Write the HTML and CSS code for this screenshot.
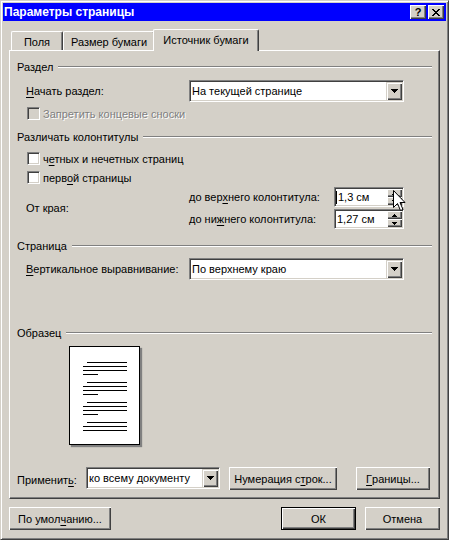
FILE: index.html
```html
<!DOCTYPE html>
<html lang="ru">
<head>
<meta charset="utf-8">
<title>Параметры страницы</title>
<link rel="stylesheet" href="styles.css">
</head>
<body>
<div class="window">
  <div class="titlebar">
    <span class="title">Параметры страницы</span>
    <div class="caption-btns">
      <span class="cbtn help">?</span>
      <span class="cbtn"><svg width="8" height="7" viewBox="0 0 8 7" shape-rendering="crispEdges"><path d="M0 0h2v1H0z M6 0h2v1H6z M1 1h2v1H1z M5 1h2v1H5z M2 2h4v1H2z M3 3h2v1H3z M2 4h4v1H2z M1 5h2v1H1z M5 5h2v1H5z M0 6h2v1H0z M6 6h2v1H6z" fill="#000"/></svg></span>
    </div>
  </div>

  <div class="tabs">
    <div class="tab t1">Поля</div>
    <div class="tab t2">Размер бумаги</div>
    <div class="tab t3 active">Источник бумаги</div>
  </div>

  <div class="panel">
    <div class="group"><span>Раздел</span><span class="rule"></span></div>

    <div class="row indent mt6">
      <span class="lbl"><u>Н</u>ачать раздел:</span>
      <div class="combo c-wide">
        <span class="combo-text">На текущей странице</span>
        <span class="drop"><svg width="7" height="4" viewBox="0 0 7 4" shape-rendering="crispEdges"><path d="M0 0h7v1H0z M1 1h5v1H1z M2 2h3v1H2z M3 3h1v1H3z" fill="#000"/></svg></span>
      </div>
    </div>

    <div class="chk disabled mt4"><span class="box"></span><span>Запретить концевые сноски</span></div>

    <div class="group mt9"><span>Различать колонтитулы</span><span class="rule"></span></div>

    <div class="chk mt7"><span class="box"></span><span>ч<u>е</u>тных и нечетных страниц</span></div>
    <div class="chk mt4"><span class="box"></span><span>перв<u>о</u>й страницы</span></div>

    <div class="margins mt2">
      <span class="lbl">От края:</span>
      <div class="spin-col">
        <div class="spin-row">
          <span class="spin-lbl">до вер<u>х</u>него колонтитула:</span>
          <div class="spin">
            <span class="spin-text"><i class="caret"></i>1,3 см</span>
            <span class="spin-btns">
              <span class="sb"><svg width="5" height="3" viewBox="0 0 5 3" shape-rendering="crispEdges"><path d="M2 0h1v1H2z M1 1h3v1H1z M0 2h5v1H0z" fill="#000"/></svg></span>
              <span class="sb"><svg width="5" height="3" viewBox="0 0 5 3" shape-rendering="crispEdges"><path d="M0 0h5v1H0z M1 1h3v1H1z M2 2h1v1H2z" fill="#000"/></svg></span>
            </span>
            <svg class="cursor" width="13" height="22" viewBox="0 0 13 22"><polygon points="0.5,0.5 0.5,17.5 4.5,13.5 7.5,20.5 10,19.5 7,12.5 12,12.5" fill="#fff" stroke="#000" stroke-width="1" stroke-linejoin="miter"/></svg>
          </div>
        </div>
        <div class="spin-row">
          <span class="spin-lbl">до ни<u>ж</u>него колонтитула:</span>
          <div class="spin">
            <span class="spin-text">1,27 см</span>
            <span class="spin-btns">
              <span class="sb"><svg width="5" height="3" viewBox="0 0 5 3" shape-rendering="crispEdges"><path d="M2 0h1v1H2z M1 1h3v1H1z M0 2h5v1H0z" fill="#000"/></svg></span>
              <span class="sb"><svg width="5" height="3" viewBox="0 0 5 3" shape-rendering="crispEdges"><path d="M0 0h5v1H0z M1 1h3v1H1z M2 2h1v1H2z" fill="#000"/></svg></span>
            </span>
          </div>
        </div>
      </div>
    </div>

    <div class="group mt10"><span>Страница</span><span class="rule"></span></div>

    <div class="row indent mt5">
      <span class="lbl"><u>В</u>ертикальное выравнивание:</span>
      <div class="combo c-wide">
        <span class="combo-text">По верхнему краю</span>
        <span class="drop"><svg width="7" height="4" viewBox="0 0 7 4" shape-rendering="crispEdges"><path d="M0 0h7v1H0z M1 1h5v1H1z M2 2h3v1H2z M3 3h1v1H3z" fill="#000"/></svg></span>
      </div>
    </div>

    <div class="group mt46"><span>Образец</span><span class="rule"></span></div>

    <div class="preview">
      <div class="para"><i class="ln first"></i><i class="ln"></i><i class="ln"></i><i class="ln short"></i></div>
      <div class="para"><i class="ln first"></i><i class="ln"></i><i class="ln"></i><i class="ln short"></i></div>
      <div class="para"><i class="ln first"></i><i class="ln"></i><i class="ln"></i><i class="ln short"></i></div>
      <div class="para"><i class="ln first"></i><i class="ln"></i><i class="ln"></i></div>
    </div>

    <div class="apply">
      <span class="apply-lbl">Применит<u>ь</u>:</span>
      <div class="combo c-apply">
        <span class="combo-text">ко всему документу</span>
        <span class="drop"><svg width="7" height="4" viewBox="0 0 7 4" shape-rendering="crispEdges"><path d="M0 0h7v1H0z M1 1h5v1H1z M2 2h3v1H2z M3 3h1v1H3z" fill="#000"/></svg></span>
      </div>
      <button class="btn b-lines">Нумерация с<u>т</u>рок...</button>
      <button class="btn b-borders"><u>Г</u>раницы...</button>
    </div>
  </div>

  <div class="footer">
    <button class="btn b-default">По умол<u>ч</u>анию...</button>
    <button class="btn b-ok">ОК</button>
    <button class="btn b-cancel">Отмена</button>
  </div>
</div>
</body>
</html>
```

FILE: styles.css
```css
* {
  box-sizing: border-box;
  margin: 0;
  padding: 0;
}

html, body {
  width: 449px;
  height: 540px;
  overflow: hidden;
  background: #d4d0c8;
}

body {
  font-family: "Liberation Sans", Arial, sans-serif;
  font-size: 11px;
  line-height: 14px;
  color: #000;
}

u {
  text-decoration: underline;
  text-underline-offset: 2px;
}

i {
  display: block;
  font-style: normal;
}

.window {
  width: 449px;
  height: 540px;
  border: 1px solid;
  border-color: #d4d0c8 #404040 #404040 #d4d0c8;
  box-shadow: inset 1px 1px #fff, inset -1px -1px #808080;
  padding: 2px;
  display: flex;
  flex-direction: column;
  background: #d4d0c8;
}

/* Title bar */
.titlebar {
  flex: none;
  height: 18px;
  background: #0000ff;
  display: flex;
  align-items: center;
  justify-content: space-between;
  padding: 0 2px 0 1px;
}

.title {
  color: #fff;
  font-weight: bold;
  font-size: 12px;
  line-height: 18px;
}

.caption-btns {
  display: flex;
  gap: 2px;
}

.cbtn {
  width: 16px;
  height: 14px;
  background: #d4d0c8;
  box-shadow: inset 1px 1px #fff, inset -1px -1px #404040, inset -2px -2px #808080;
  display: flex;
  align-items: center;
  justify-content: center;
  font-weight: bold;
  font-size: 11px;
  line-height: 14px;
}

.help {
  padding-bottom: 1px;
}

/* Tabs */
.tabs {
  flex: none;
  display: flex;
  align-items: flex-end;
  height: 21px;
  margin-top: 8px;
  padding-left: 8px;
}

.tab {
  height: 19px;
  border-top: 1px solid #fff;
  border-left: 1px solid #fff;
  border-right: 1px solid #404040;
  box-shadow: inset -1px 0 #808080;
  border-top-left-radius: 2px;
  border-top-right-radius: 2px;
  text-align: center;
  padding-top: 3px;
  line-height: 14px;
  background: #d4d0c8;
}

.t1 { width: 52px; }
.t2 { width: 92px; }

.tab.active {
  width: 106px;
  height: 22px;
  margin-left: -2px;
  margin-bottom: -1px;
  position: relative;
  z-index: 1;
}

/* Panel */
.panel {
  flex: none;
  margin: 0 6px;
  height: 449px;
  border: 1px solid;
  border-color: #fff #404040 #404040 #fff;
  box-shadow: inset -1px -1px #808080;
  padding: 9px 7px 8px 7px;
  display: flex;
  flex-direction: column;
}

.group {
  flex: none;
  display: flex;
  align-items: center;
  height: 14px;
}

.rule {
  flex: 1;
  height: 2px;
  border-top: 1px solid #808080;
  border-bottom: 1px solid #fff;
  margin-left: 5px;
}

.row {
  flex: none;
  display: flex;
  align-items: center;
}

.indent {
  padding-left: 9px;
}

.lbl {
  width: 163px;
  flex: none;
}

.mt2 { margin-top: 2px; }
.mt4 { margin-top: 4px; }
.mt5 { margin-top: 5px; }
.mt6 { margin-top: 6px; }
.mt7 { margin-top: 7px; }
.mt9 { margin-top: 9px; }
.mt10 { margin-top: 10px; }
.mt46 { margin-top: 46px; }

/* Combo box */
.combo {
  flex: none;
  display: flex;
  align-items: center;
  height: 22px;
  background: #fff;
  border: 1px solid;
  border-color: #808080 #fff #fff #808080;
  box-shadow: inset 1px 1px #404040, inset -1px -1px #d4d0c8;
  padding: 1px;
}

.c-wide { width: 215px; }
.c-apply { width: 134px; margin-right: 9px; }

.combo-text {
  flex: 1;
  padding-left: 1px;
  white-space: nowrap;
  overflow: hidden;
}

.drop {
  flex: none;
  width: 16px;
  height: 18px;
  background: #d4d0c8;
  box-shadow: inset 1px 1px #d4d0c8, inset 2px 2px #fff, inset -1px -1px #404040, inset -2px -2px #808080;
  display: flex;
  align-items: center;
  justify-content: center;
}

.drop svg {
  display: block;
}

/* Checkbox */
.chk {
  flex: none;
  display: flex;
  align-items: center;
  height: 15px;
  padding-left: 10px;
}

.box {
  flex: none;
  width: 13px;
  height: 13px;
  background: #fff;
  border: 1px solid;
  border-color: #808080 #fff #fff #808080;
  box-shadow: inset 1px 1px #404040, inset -1px -1px #d4d0c8;
  margin-right: 3px;
}

.chk.disabled {
  color: #808080;
  text-shadow: 1px 1px 0 #fff;
}

.chk.disabled .box {
  background: #d4d0c8;
}

/* Margins / spin boxes */
.margins {
  flex: none;
  display: flex;
  align-items: center;
  padding-left: 9px;
}

.spin-col {
  display: flex;
  flex-direction: column;
  gap: 2px;
}

.spin-row {
  display: flex;
  align-items: center;
}

.spin-lbl {
  width: 145px;
  flex: none;
}

.spin {
  position: relative;
  flex: none;
  width: 70px;
  height: 20px;
  display: flex;
  background: #fff;
  border: 1px solid;
  border-color: #808080 #fff #fff #808080;
  box-shadow: inset 1px 1px #404040, inset -1px -1px #d4d0c8;
  padding: 1px;
}

.spin-text {
  flex: 1;
  display: flex;
  align-items: center;
  padding-left: 1px;
  white-space: nowrap;
}

.caret {
  width: 1px;
  height: 13px;
  background: #000;
  margin-left: -1px;
  margin-right: 1px;
}

.spin-btns {
  flex: none;
  width: 15px;
  display: flex;
  flex-direction: column;
}

.sb {
  flex: 1;
  background: #d4d0c8;
  box-shadow: inset 1px 1px #fff, inset -1px -1px #404040, inset -2px -2px #808080;
  display: flex;
  align-items: center;
  justify-content: center;
}

.sb svg {
  display: block;
}

.cursor {
  position: absolute;
  left: 58px;
  top: 2px;
  z-index: 2;
}

/* Preview */
.preview {
  flex: none;
  margin-top: 6px;
  margin-left: 52px;
  width: 71px;
  height: 99px;
  background: #fff;
  border: 1px solid #000;
  box-shadow: 2px 2px 1px #808080;
  padding: 15px 0 0 13px;
}

.para {
  display: flex;
  flex-direction: column;
  gap: 3px;
  margin-bottom: 7px;
}

.ln {
  height: 1px;
  width: 44px;
  background: #000;
}

.ln.first {
  margin-left: 4px;
  width: 40px;
}

.ln.short {
  width: 15px;
}

/* Apply row */
.apply {
  flex: none;
  margin-top: auto;
  display: flex;
  align-items: flex-start;
  height: 23px;
}

.apply-lbl {
  width: 69px;
  flex: none;
  padding-top: 6px;
}

/* Buttons */
.btn {
  flex: none;
  height: 23px;
  background: #d4d0c8;
  border: none;
  font: inherit;
  color: #000;
  line-height: 14px;
  display: flex;
  align-items: center;
  justify-content: center;
  box-shadow: inset 1px 1px #fff, inset -1px -1px #404040, inset -2px -2px #808080;
  white-space: nowrap;
}

.b-lines { width: 108px; margin-right: 19px; }
.b-borders { width: 74px; }

.footer {
  flex: none;
  display: flex;
  gap: 9px;
  margin: 8px 6px 0;
}

.b-default { width: 102px; }

.b-ok {
  width: 75px;
  margin-left: auto;
  border: 1px solid #000;
}

.b-cancel { width: 75px; }
```
